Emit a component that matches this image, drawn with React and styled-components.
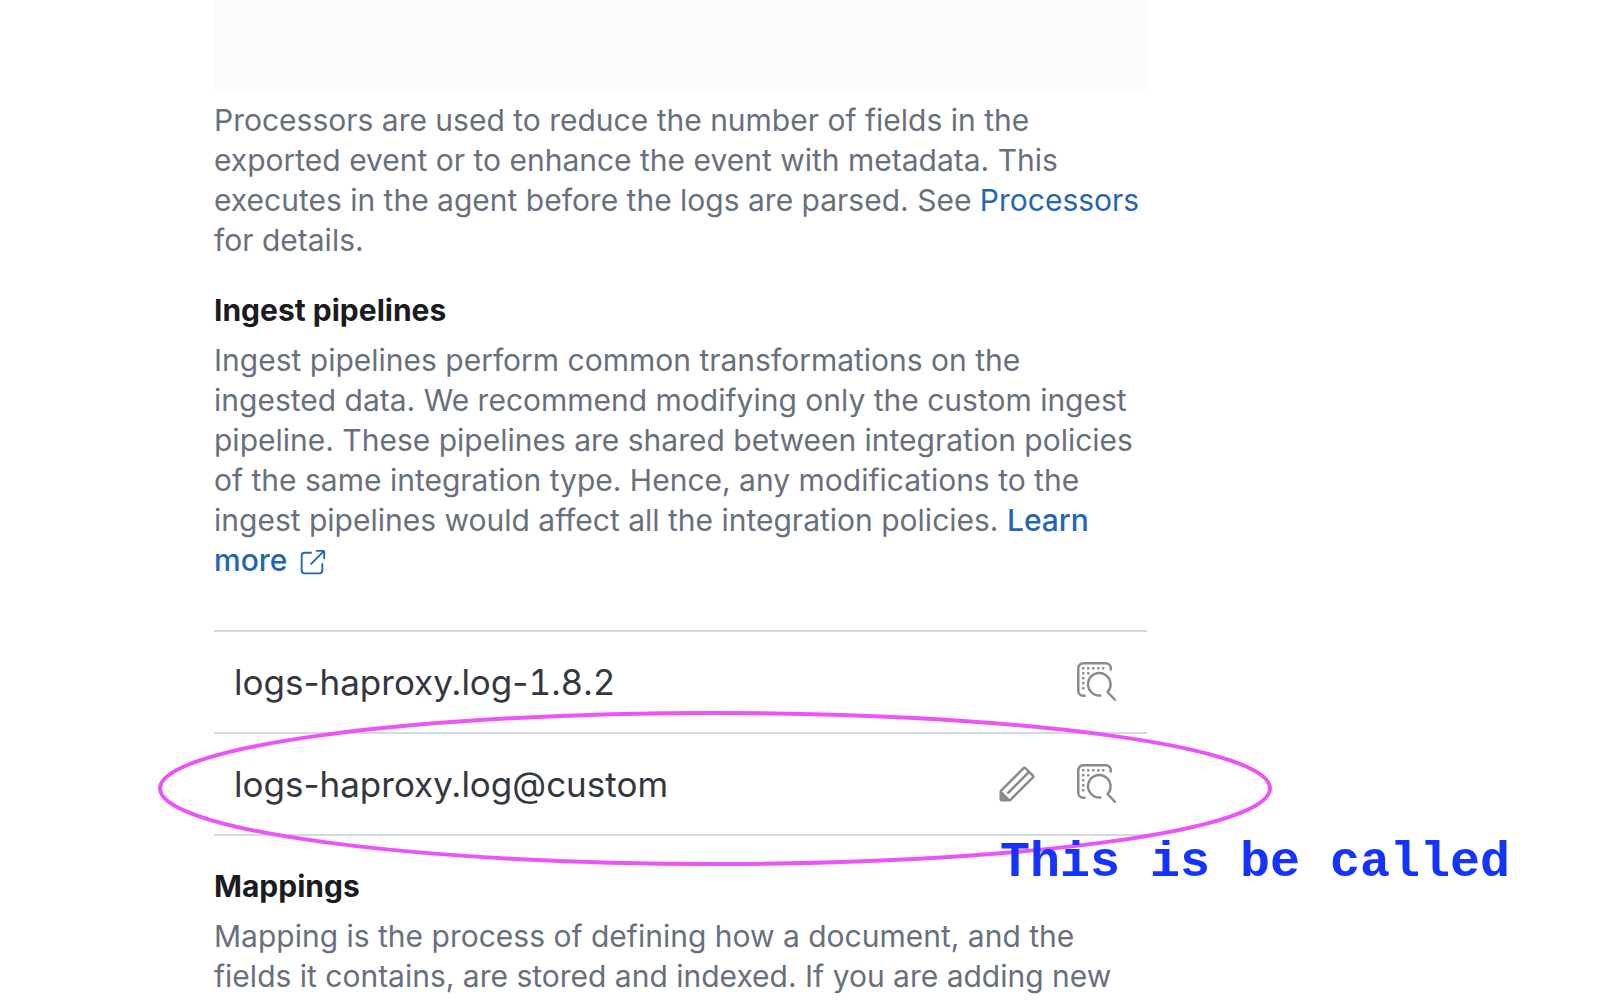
import React from 'react';
import styled, { createGlobalStyle } from 'styled-components';

const GlobalStyle = createGlobalStyle`
  * {
    box-sizing: border-box;
  }
  body {
    margin: 0;
    height: 100vh;
    overflow: hidden;
    background: #ffffff;
    font-family: Inter, "Liberation Sans", sans-serif;
  }
`;

const Column = styled.main`
  position: relative;
  max-width: 933px;
  margin-left: 214px;
`;

const ProcessorsInput = styled.textarea`
  display: block;
  width: 100%;
  height: 90px;
  border: none;
  outline: none;
  resize: none;
  background: #fbfcfe;
`;

const Text = styled.p`
  margin: 0;
  padding-top: 10px;
  color: #69707d;
  font-size: 30px;
  line-height: 40px;
`;

const Title = styled.h2`
  margin: 0;
  padding-top: 30px;
  color: #1a1c21;
  font-size: 30px;
  font-weight: 700;
  line-height: 40px;
`;

const Link = styled.a`
  color: #2466b4;
  font-weight: ${(props) => (props.$strong ? 500 : 400)};
  text-decoration: none;
`;

const PopoutSvg = styled.svg`
  width: 30px;
  height: 30px;
  margin-left: 2px;
  vertical-align: middle;
  fill: currentColor;
`;

const Pipelines = styled.table`
  width: 100%;
  margin-top: 50px;
  border-collapse: separate;
  border-spacing: 0;
  border-top: 2px solid #d3dae6;
`;

const Cell = styled.td`
  height: 102px;
  padding: 0 20px;
  border-bottom: 2px solid #d3dae6;
  color: #343741;
  font-size: 35px;
`;

const Version = styled.span`
  font-variant-numeric: tabular-nums;
`;

const Actions = styled.div`
  display: flex;
  justify-content: flex-end;
  gap: 40px;
  padding-right: 10px;
`;

const IconButton = styled.button`
  display: flex;
  padding: 0;
  border: none;
  background: none;
  color: #8a8a8a;
  cursor: pointer;
`;

const IconSvg = styled.svg`
  width: 40px;
  height: 40px;
`;

// hand drawn marks lying over the page
const Circle = styled.svg`
  position: absolute;
  top: 711px;
  left: -56px;
  width: 1114px;
  height: 155px;
  fill: none;
  stroke: #ec53f8;
  stroke-width: 4px;
  pointer-events: none;
`;

const Note = styled.div`
  position: absolute;
  top: 835px;
  left: 786px;
  color: #1433ff;
  font-family: "Courier New", "Liberation Mono", monospace;
  font-size: 50px;
  font-weight: 700;
  line-height: 56px;
  white-space: nowrap;
`;

const PopoutIcon = () => (
  <PopoutSvg viewBox="0 0 16 16" aria-hidden="true">
    <path d="M13 8.5a.5.5 0 111 0V12a2 2 0 01-2 2H4a2 2 0 01-2-2V4a2 2 0 012-2h3.5a.5.5 0 010 1H4a1 1 0 00-1 1v8a1 1 0 001 1h8a1 1 0 001-1V8.5zm-5.12.339a.5.5 0 11-.706-.707L13.305 2H10.5a.5.5 0 110-1H14a1 1 0 011 1v3.5a.5.5 0 11-1 0V2.72L7.88 8.838z" />
  </PopoutSvg>
);

const PencilIcon = () => (
  <IconSvg viewBox="0 0 16 16" fill="currentColor" aria-hidden="true">
    <path d="M12.148 3.148L11 2l-9 9v3h3l9-9-1.144-1.144-8.002 7.998a.502.502 0 01-.708 0 .502.502 0 010-.708l8.002-7.998zM11 1c.256 0 .512.098.707.293l3 3a.999.999 0 010 1.414l-9 9A.997.997 0 015 15H2a1 1 0 01-1-1v-3c0-.265.105-.52.293-.707l9-9A.997.997 0 0111 1z" />
    <path d="M2 11v3h3z" />
  </IconSvg>
);

const InspectIcon = () => (
  <IconSvg viewBox="0 0 16 16" fill="none" stroke="currentColor" strokeLinecap="round" aria-hidden="true">
    <path d="M3 13.5h-.5a2 2 0 0 1-2-2v-9a2 2 0 0 1 2-2h9a2 2 0 0 1 2 2V3" />
    <path d="M9.3 13.4A4.5 4.5 0 1 1 12.2 12l3 3.1" strokeLinejoin="round" />
    <g fill="currentColor" stroke="none">
      {[2, 4, 6, 8, 10].map((x) => <rect key={x} x={x} y="2" width="1" height="1" rx=".3" />)}
      {[4, 6, 8, 10].map((y) => <rect key={y} x="2" y={y} width="1" height="1" rx=".3" />)}
      <rect x="4" y="4" width="1" height="1" rx=".3" />
    </g>
  </IconSvg>
);

const pipelines = [
  { name: 'logs-haproxy.log-', version: '1.8.2', editable: false },
  { name: 'logs-haproxy.log@custom', editable: true },
];

const PipelineRow = ({ name, version, editable }) => (
  <tr>
    <Cell>
      {name}
      {version && <Version>{version}</Version>}
    </Cell>
    <Cell>
      <Actions>
        {editable && (
          <IconButton type="button" aria-label={`Edit ${name}`}>
            <PencilIcon />
          </IconButton>
        )}
        <IconButton type="button" aria-label={`Inspect ${name}${version || ''}`}>
          <InspectIcon />
        </IconButton>
      </Actions>
    </Cell>
  </tr>
);

export default function App() {
  return (
    <>
      <GlobalStyle />
      <Column>
        <ProcessorsInput aria-label="Processors" />
        <Text>
          Processors are used to reduce the number of fields in the exported event or to enhance
          the event with metadata. This executes in the agent before the logs are parsed.
          See <Link href="#processors">Processors</Link> for details.
        </Text>

        <Title>Ingest pipelines</Title>
        <Text>
          Ingest pipelines perform common transformations on the ingested data. We recommend
          modifying only the custom ingest pipeline. These pipelines are shared between
          integration policies of the same integration type. Hence, any modifications to the
          ingest pipelines would affect all the integration policies.{' '}
          <Link href="#learn-more" $strong>Learn more <PopoutIcon /></Link>
        </Text>
        <Pipelines>
          <tbody>
            {pipelines.map((p) => <PipelineRow key={p.name} {...p} />)}
          </tbody>
        </Pipelines>

        <Title>Mappings</Title>
        <Text>
          Mapping is the process of defining how a document, and the fields it contains, are
          stored and indexed. If you are adding new
        </Text>

        <Circle viewBox="0 0 1114 155" aria-hidden="true">
          <ellipse cx="557" cy="77.5" rx="555" ry="75.5" />
        </Circle>
        <Note>This is be called</Note>
      </Column>
    </>
  );
}
